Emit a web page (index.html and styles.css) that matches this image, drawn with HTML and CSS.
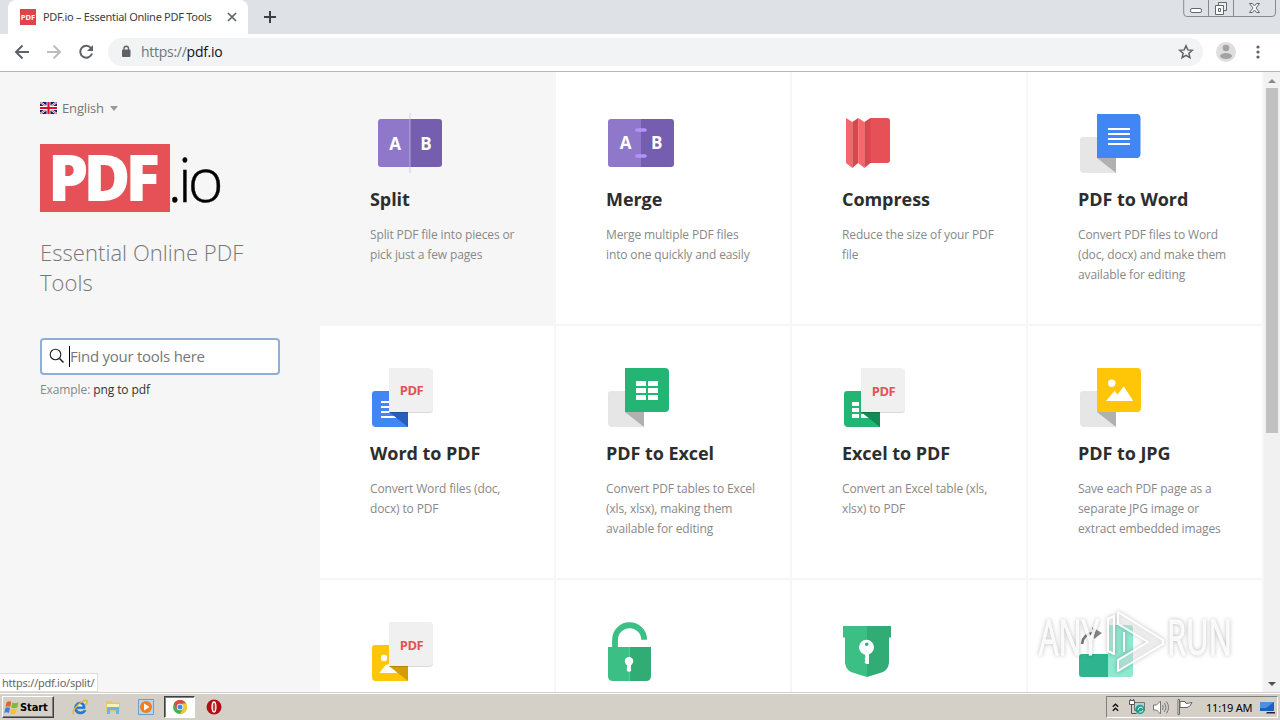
FILE: index.html
```
<!DOCTYPE html>
<html lang="en">
<head>
    <meta charset="UTF-8">
    <meta name="viewport" content="width=device-width, initial-scale=1.0">
    <title>PDF.io – Essential Online PDF Tools</title>
    <link rel="stylesheet" href="styles.css">
</head>
<body>
    <div class="screen">
        <header class="tab-strip">
            <div class="tab">
                <span class="favicon">PDF</span>
                <span class="tab-title">PDF.io – Essential Online PDF Tools</span>
                <svg class="tab-close" width="10" height="10" viewBox="0 0 10 10"><path d="M1 1l8 8M9 1L1 9" stroke="#5f6368" stroke-width="1.7"/></svg>
            </div>
            <svg class="new-tab" width="14" height="14" viewBox="0 0 14 14"><path d="M7 1v12M1 7h12" stroke="#3c4043" stroke-width="2"/></svg>
            <svg class="window-buttons" width="94" height="18" viewBox="0 0 94 18" fill="none" stroke="#62666d">
                <path d="M.7-1V13q0 3.5 3 3.5H89q3.500 0 3.500-3.500V-1M25.500 0v16M50.500 0v16" stroke="#858a94"/>
                <rect x="7.500" y="8.500" width="11" height="4" rx="1.500" fill="#fff"/>
                <path d="M35.500 2.500h8v8h-8z" fill="#eee"/>
                <path d="M32.500 5.500h8v9h-8z" fill="#fff"/>
                <path d="M35.500 8.500h2v3h-2z"/>
                <path d="M66.500 3.500h3l2 2.500 2-2.500h3l-3.500 4.500 3.500 4.500h-3l-2-2.500-2 2.500h-3l3.500-4.500z" fill="#fff"/>
            </svg>
        </header>

        <div class="toolbar">
            <svg width="16" height="16" viewBox="0 0 16 16" fill="none" stroke="#5f6368" stroke-width="2"><path d="M15 8H2M8.500 1.500L2 8l6.500 6.500"/></svg>
            <svg width="16" height="16" viewBox="0 0 16 16" fill="none" stroke="#babcbe" stroke-width="2"><path d="M1 8h13M7.500 1.500L14 8l-6.500 6.500"/></svg>
            <svg width="16" height="16" viewBox="0 0 16 16" fill="none" stroke="#5f6368" stroke-width="2"><path d="M13 4A6 6 0 1 0 14 9.500"/><path d="M15 1v6H9z" fill="#5f6368" stroke="none"/></svg>
            <div class="address-bar">
                <svg width="10" height="13" viewBox="0 0 10 13"><rect x="1" y="4.500" width="8.500" height="7.500" rx="1" fill="#5f6368"/><path d="M3 5V3.500a2.200 2.200 0 0 1 4.500 0V5" fill="none" stroke="#5f6368" stroke-width="1.400"/></svg>
                <span class="url"><span class="scheme">https://</span>pdf.io</span>
                <svg class="star" width="16" height="16" viewBox="0 0 16 16"><path d="M8 1.800l1.800 4.100 4.500.4-3.400 3 1 4.400L8 11.400l-3.900 2.300 1-4.400-3.400-3 4.500-.4z" fill="none" stroke="#5f6368" stroke-width="1.500"/></svg>
            </div>
            <svg class="avatar" width="20" height="20" viewBox="0 0 20 20"><circle cx="10" cy="10" r="10" fill="#dedede"/><circle cx="10" cy="6" r="3.300" fill="#a3a3a3"/><ellipse cx="10" cy="14" rx="6" ry="3" fill="#a3a3a3"/></svg>
            <svg class="menu-dots" width="4" height="14" viewBox="0 0 4 14" fill="#5f6368"><circle cx="2" cy="2" r="1.600"/><circle cx="2" cy="7" r="1.600"/><circle cx="2" cy="12" r="1.600"/></svg>
        </div>

        <div class="page">
            <aside class="sidebar">
                <div class="language">
                    <svg width="17" height="12" viewBox="0 0 17 12">
                        <path d="M0 0h17v12H0z" fill="#16166b"/>
                        <path d="M0 0l17 12M17 0L0 12" stroke="#fff" stroke-width="2"/>
                        <path d="M0 0l17 12M17 0L0 12" stroke="#d8213b" stroke-width=".8"/>
                        <path d="M8.500 0v12M0 6h17" stroke="#fff" stroke-width="3.800"/>
                        <path d="M8.500 0v12M0 6h17" stroke="#d80d2a" stroke-width="2.200"/>
                    </svg>
                    <span>English</span>
                    <i class="caret"></i>
                </div>
                <svg class="logo" width="190" height="68" viewBox="0 0 190 68">
                    <path d="M0 0h130v68H0z" fill="#e65157"/>
                    <text class="logo-pdf" x="8" y="57" textLength="112">PDF</text>
                    <text class="logo-io" x="127.500" y="57.500" textLength="56">.io</text>
                </svg>
                <p class="tagline">Essential Online PDF Tools</p>
                <div class="search">
                    <svg width="16" height="16" viewBox="0 0 16 16" fill="none" stroke="#222"><circle cx="6.500" cy="6.500" r="5.300" stroke-width="1.100"/><path d="M10.500 10.500l4 4" stroke-width="1.600"/></svg>
                    <i class="cursor"></i>
                    <span>Find your tools here</span>
                </div>
                <p class="example">Example: <span>png to pdf</span></p>
            </aside>

            <main class="tools">
                <div class="tool active">
                    <svg class="icon" viewBox="0 0 72 64">
                        <path d="M40 7H11q-3 0-3 3v42q0 3 3 3h29z" fill="#8f78ca"/>
                        <path d="M40 7h29q3 0 3 3v42q0 3-3 3H40z" fill="#755db0"/>
                        <path d="M40 1v60" stroke="#c9c3dc" stroke-opacity=".5" stroke-width="1.500"/>
                        <text class="letter" x="25" y="38">A</text>
                        <text class="letter" x="56" y="38">B</text>
                    </svg>
                    <h3>Split</h3>
                    <p>Split PDF file into pieces or<br>pick just a few pages</p>
                </div>
                <div class="tool">
                    <svg class="icon" viewBox="0 0 72 64">
                        <path d="M35 7H5q-3 0-3 3v42q0 3 3 3h30z" fill="#8f78ca"/>
                        <path d="M35 7h30q3 0 3 3v42q0 3-3 3H35z" fill="#755db0"/>
                        <path d="M31 18h8M31 44h8" stroke="#b294f8" stroke-width="3.600" stroke-linecap="round"/>
                        <text class="letter" x="19.600" y="37">A</text>
                        <text class="letter" x="50.700" y="37">B</text>
                    </svg>
                    <h3>Merge</h3>
                    <p>Merge multiple PDF files<br>into one quickly and easily</p>
                </div>
                <div class="tool">
                    <svg class="icon" viewBox="0 0 72 64">
                        <path d="M28 6h17q3 0 3 3v39q0 3-3 3H28z" fill="#e65157"/>
                        <path d="M4 6l6.300 4v46L4 51z" fill="#f4676d"/>
                        <path d="M16.200 6l-5.900 4v46l5.900-5z" fill="#d6484e"/>
                        <path d="M16.200 6l6.100 4v46l-6.100-5z" fill="#f4676d"/>
                        <path d="M28.500 6l-6.200 4v46l6.200-5z" fill="#d6484e"/>
                    </svg>
                    <h3>Compress</h3>
                    <p>Reduce the size of your PDF<br>file</p>
                </div>
                <div class="tool">
                    <svg class="icon" viewBox="0 0 72 64">
                        <path d="M2 28q0-3 3-3h33v36H6q-4 0-4-4z" fill="#e6e6e6"/>
                        <path d="M19 46h19v15z" fill="#b1b1b1"/>
                        <path d="M19 2h40q3 0 3.500 4v36q-.5 4-3.500 4H19z" fill="#4285f4"/>
                        <path d="M30 17h22M30 22h22M30 27h22M30 32h22" stroke="#fff" stroke-width="2"/>
                    </svg>
                    <h3>PDF to Word</h3>
                    <p>Convert PDF files to Word<br>(doc, docx) and make them<br>available for editing</p>
                </div>
                <div class="tool">
                    <svg class="icon" viewBox="0 0 72 64">
                        <path d="M2 28q0-3 3-3h33v36H6q-4 0-4-4z" fill="#4285f4"/>
                        <path d="M11 36h10M11 41h10M11 46h11M11 51h15" stroke="#fff" stroke-width="2"/>
                        <path d="M19 46h19v15z" fill="#2a5db8"/>
                        <path class="sheet" d="M19 2h40q4 0 4 4v36q0 4-4 4H19z"/>
                        <text class="pdf" x="41.500" y="29.300">PDF</text>
                    </svg>
                    <h3>Word to PDF</h3>
                    <p>Convert Word files (doc,<br>docx) to PDF</p>
                </div>
                <div class="tool">
                    <svg class="icon" viewBox="0 0 72 64">
                        <path d="M2 28q0-3 3-3h33v36H6q-4 0-4-4z" fill="#e6e6e6"/>
                        <path d="M19 46h19v15z" fill="#b1b1b1"/>
                        <path d="M19 2h40q4 0 4 4v36q0 4-4 4H19z" fill="#23b574"/>
                        <path d="M30 15h10v5H30zM42 15h10v5H42zM30 22h10v5H30zM42 22h10v5H42zM30 29h10v5H30zM42 29h10v5H42z" fill="#fff"/>
                    </svg>
                    <h3>PDF to Excel</h3>
                    <p>Convert PDF tables to Excel<br>(xls, xlsx), making them<br>available for editing</p>
                </div>
                <div class="tool">
                    <svg class="icon" viewBox="0 0 72 64">
                        <path d="M2 28q0-3 3-3h33v36H6q-4 0-4-4z" fill="#23b574"/>
                        <path d="M10 36h7v4h-7zM10 42h7v4h-7zM10 48h7v4h-7zM19 48h9v4h-9z" fill="#fff"/>
                        <path d="M19 46h19v15z" fill="#148a53"/>
                        <path class="sheet" d="M19 2h40q4 0 4 4v36q0 4-4 4H19z"/>
                        <text class="pdf" x="41.500" y="30.300">PDF</text>
                    </svg>
                    <h3>Excel to PDF</h3>
                    <p>Convert an Excel table (xls,<br>xlsx) to PDF</p>
                </div>
                <div class="tool">
                    <svg class="icon" viewBox="0 0 72 64">
                        <path d="M2 28q0-3 3-3h33v36H6q-4 0-4-4z" fill="#e6e6e6"/>
                        <path d="M19 46h19v15z" fill="#b1b1b1"/>
                        <path d="M19 2h40q4 0 4 4v36q0 4-4 4H19z" fill="#fec606"/>
                        <circle cx="33.700" cy="17.300" r="3.700" fill="#fff"/>
                        <path d="M28 35l8.700-10.300 2.600 4 6.400-8.400L55.300 35z" fill="#fff"/>
                    </svg>
                    <h3>PDF to JPG</h3>
                    <p>Save each PDF page as a<br>separate JPG image or<br>extract embedded images</p>
                </div>
                <div class="tool">
                    <svg class="icon" viewBox="0 0 72 64">
                        <path d="M2 28q0-3 3-3h33v36H6q-4 0-4-4z" fill="#fec606"/>
                        <circle cx="14" cy="38" r="3.200" fill="#fff"/>
                        <path d="M9.300 53l6.400-8 4-1 7.600 9z" fill="#fff"/>
                        <path d="M19 46h19v15z" fill="#d59c06"/>
                        <path class="sheet" d="M19 2h40q4 0 4 4v36q0 4-4 4H19z"/>
                        <text class="pdf" x="41.500" y="30.300">PDF</text>
                    </svg>
                </div>
                <div class="tool">
                    <svg class="icon" viewBox="0 0 72 64">
                        <path d="M9 28v-8a14.600 14.600 0 0 1 29.200-.3" fill="none" stroke="#3bbf84" stroke-width="5.800"/>
                        <path d="M23.500 27H2v29q0 5 5 5h16.500z" fill="#3bbf84"/>
                        <path d="M23.500 27H45v29q0 5-5 5H23.500z" fill="#31ac74"/>
                        <path d="M21.200 43h3.600l.4 8q-2.200 1.500-4.400 0z" fill="#fff"/>
                        <circle cx="23" cy="41.300" r="4.200" fill="#fff"/>
                    </svg>
                </div>
                <div class="tool">
                    <svg class="icon" viewBox="0 0 72 64">
                        <path d="M25 6H1v11.500h2V43q1 8 9 10l13 4z" fill="#3bbf84"/>
                        <path d="M25 6h24v11.500h-2V43q-1 8-9 10l-13 4z" fill="#31ac74"/>
                        <circle cx="24.500" cy="27.300" r="7.500" fill="#fff"/>
                        <path d="M22.500 33h4.500v11h-3l-1.500-2 1-1.500-1-1.500 1-1.500z" fill="#fff"/>
                        <circle cx="24.700" cy="24.300" r="1.700" fill="#31ac74"/>
                    </svg>
                </div>
                <div class="tool">
                    <svg class="icon" viewBox="0 0 72 64">
                        <path d="M4 24q1-10 11-11" fill="none" stroke="#777" stroke-width="2.600"/>
                        <path d="M14 7l10 6-8 6z" fill="#888"/>
                        <path d="M30 34H4q-3 0-3 3v17q0 3 3 3h26z" fill="#2fb490"/>
                        <path d="M30 5h22q3 0 3 3v46q0 3-3 3H30z" fill="#8fe8d0"/>
                    </svg>
                </div>
            </main>

            <div class="scrollbar">
                <i class="arrow-up"></i>
                <i class="thumb"></i>
                <i class="arrow-down"></i>
            </div>
            <div class="status">https://pdf.io/split/</div>
            <svg class="watermark" width="206" height="76" viewBox="0 0 206 76">
                <text x="5" y="53" textLength="60" lengthAdjust="spacingAndGlyphs">ANY</text>
                <text x="133" y="53" textLength="65" lengthAdjust="spacingAndGlyphs">RUN</text>
                <path d="M74 17L80 14V52L74 49zM84 10L129 38 129 42 84 69V58L114 40 84 22z" fill="#fff" fill-opacity=".35"/>
                <path d="M74 17L80 14V52L74 49zM84 10L129 38V42L84 69V58L114 40 84 22zM90 30V50" fill="none" stroke="#fff" stroke-width="2" stroke-linejoin="round"/>
            </svg>
        </div>

        <footer class="taskbar">
            <div class="start">
                <svg width="15" height="15" viewBox="0 0 15 15">
                    <path d="M2.500 2.500Q5 .5 7.200 2L6.300 7Q4 5.500 1.500 7z" fill="#e8622c"/>
                    <path d="M8.300 2.500Q11 4 14.500 2.200L13.300 7.500Q10 9 7.300 7.500z" fill="#7dba3c"/>
                    <path d="M1.300 8Q4 6.500 6 8L5 13Q3 11.500.3 13z" fill="#3f81d6"/>
                    <path d="M7 8.500Q10 10 13 8.500L12 13Q9 15 6.200 13.500z" fill="#f6c42a"/>
                </svg>
                <span>Start</span>
            </div>
            <div class="launchers">
                <svg width="16" height="16" viewBox="0 0 16 16">
                    <path d="M13 9.500H4.500Q5 13 8.500 13q2 0 3-1.500h2.500Q12 15.300 8 15 2.500 14.300 2.500 9 3 3.500 8 3.200q5.500.3 5 6.300z" fill="#2478d0" stroke="#2478d0" stroke-width=".8"/>
                    <path d="M4.700 7.500h6Q10.300 5 7.800 5 5.300 5 4.700 7.500z" fill="#e7f3fc"/>
                    <path d="M1.500 15Q-.5 13 5 7T15 1.500q1 1.500-1.500 4.500" fill="none" stroke="#e3b52c" stroke-width="1.300"/>
                </svg>
                <svg width="16" height="16" viewBox="0 0 16 16">
                    <path d="M1 2h5l1 1.500h8V13H1z" fill="#e5c868"/>
                    <path d="M2 5h12v5H2z" fill="#faf0bd"/>
                    <path d="M2 15V9q0-1 1-1h10q1 0 1 1v6h-3v-4H5v4z" fill="#6fb3e0"/>
                </svg>
                <svg width="16" height="16" viewBox="0 0 16 16">
                    <path d="M.5.500h15v15H.5z" fill="#b7d5ef" stroke="#689dce"/>
                    <circle cx="8" cy="8" r="6" fill="#f1801c"/>
                    <path d="M6 4.500L11.500 8 6 11.500z" fill="#fff"/>
                </svg>
                <div class="pressed">
                    <svg width="14" height="14" viewBox="0 0 14 14">
                        <circle cx="7" cy="7" r="7" fill="#4cae50"/>
                        <path d="M.9 3.500A7 7 0 0 1 13.100 3.500H7L4 8.800z" fill="#dd4a3d"/>
                        <path d="M13.100 3.500A7 7 0 0 1 7 14l3-5.200-.5-5.300z" fill="#fbc62f"/>
                        <circle cx="7" cy="7" r="3.200" fill="#fff"/>
                        <circle cx="7" cy="7" r="2.500" fill="#4286ef"/>
                    </svg>
                </div>
                <svg width="16" height="16" viewBox="0 0 16 16">
                    <circle cx="8" cy="8" r="7.500" fill="#b50d15"/>
                    <ellipse cx="8" cy="8" rx="1.900" ry="5" fill="#c84048" stroke="#fff" stroke-width="1.300"/>
                </svg>
            </div>
            <div class="tray">
                <svg width="7" height="9" viewBox="0 0 7 9" fill="none" stroke="#111" stroke-width="1.400"><path d="M.8 3.700l2.700-2.500 2.700 2.500M.8 7.700l2.700-2.500 2.700 2.500"/></svg>
                <svg class="network" width="17" height="16" viewBox="0 0 17 16">
                    <path d="M5.500 3.500h10v8h-10z" fill="#a9d5de" stroke="#777"/>
                    <path d="M.5 1.500h5v4h-5z" fill="#fff" stroke="#555"/>
                    <path d="M1.500 0v2M4.500 0v2M2.500 5v9.500h5" fill="none" stroke="#555"/>
                    <circle cx="11" cy="10.500" r="4.700" fill="#249b8b"/>
                    <path d="M9 11q.5-3 3-3l2 1.500M14 11q-1 3-4 2" fill="none" stroke="#d5fff8"/>
                </svg>
                <svg width="17" height="15" viewBox="0 0 17 15" fill="none" stroke="#777"><path d="M.5 5h3l4-4v13l-4-4h-3z" fill="#fff"/><path d="M9.500 5q1.500 2.500 0 5M11.500 3q3 4.500 0 9M13.500 1.500q4 6 0 12"/></svg>
                <svg class="flag" width="16" height="16" viewBox="0 0 16 16" fill="#fff" stroke="#666"><path d="M1 .5h1.500v15H1z"/><path d="M3 2.500h5l1 2 6-1q-2 5-5 5H3z"/></svg>
                <time>11:19 AM</time>
                <svg width="15" height="13" viewBox="0 0 15 13"><path d="M0 1h14v9H0z" fill="#1763c1"/><path d="M0 1h14L6 7H0z" fill="#4b91dd"/><path d="M7 11h8v1.500H6z" fill="#223"/></svg>
            </div>
        </footer>
    </div>
</body>
</html>
```
FILE: styles.css
```
* {
    box-sizing: border-box;
}

body {
    margin: 0;
    overflow: hidden;
    font-family: "Open Sans", "Noto Sans", sans-serif;
    background-color: #fff;
}

svg {
    display: block;
    flex: none;
}

h3,
p {
    margin: 0;
}

.screen {
    width: 1280px;
    height: 720px;
    display: flex;
    flex-direction: column;
    overflow: hidden;
}

/* Browser window */
.tab-strip {
    height: 34px;
    flex: none;
    display: flex;
    padding-left: 8px;
    background-color: #dee1e6;
}

.tab {
    width: 240px;
    height: 34px;
    display: flex;
    align-items: center;
    padding-left: 12px;
    background-color: #fff;
    border-radius: 8px 8px 0 0;
}

.favicon {
    width: 16px;
    height: 16px;
    background-color: #e0444b;
    color: #fff;
    font-size: 7.5px;
    font-weight: 700;
    line-height: 16px;
    text-align: center;
}

.tab-title {
    width: 170px;
    margin-left: 7px;
    padding-bottom: 1px;
    color: #3c4043;
    font-family: "Noto Sans", sans-serif;
    font-size: 11px;
    letter-spacing: -0.29px;
    white-space: nowrap;
}

.tab-close {
    margin-left: 14px;
}

.new-tab {
    margin: 10px 0 0 15px;
}

.window-buttons {
    margin-left: auto;
    margin-right: 3px;
}

.toolbar {
    height: 38px;
    flex: none;
    display: flex;
    align-items: center;
    gap: 16px;
    padding: 0 20px 2px 14px;
    background-color: #fff;
    border-bottom: 1px solid #b6b4b6;
}

.address-bar {
    flex: 1;
    height: 28px;
    display: flex;
    align-items: center;
    margin-left: -2px;
    padding: 0 9px 0 13px;
    background-color: #f1f3f4;
    border-radius: 14px;
}

.url {
    margin-left: 10px;
    color: #111;
    font-size: 14px;
    letter-spacing: -0.27px;
}

.scheme {
    color: #70757a;
}

.star {
    margin-left: auto;
}

.avatar {
    margin-left: -3px;
}

.menu-dots {
    margin-left: 4px;
}

/* Page */
.page {
    position: relative;
    flex: 1;
    display: flex;
    overflow: hidden;
    background-color: #fff;
}

.sidebar {
    width: 320px;
    flex: none;
    padding: 26px 40px 0;
    background-color: #f6f6f6;
}

.language {
    height: 20px;
    display: flex;
    align-items: center;
    color: #777;
    font-size: 13px;
    letter-spacing: -0.15px;
}

.language span {
    margin: 0 6px 0 5px;
}

.caret {
    border: 4px solid transparent;
    border-top: 5px solid #999;
    border-bottom: 0;
}

.logo {
    margin-top: 26px;
}

.logo-pdf {
    font-size: 64px;
    font-weight: 800;
    fill: #fff;
}

.logo-io {
    font-size: 61px;
    font-weight: 300;
    fill: #000;
    stroke: #000;
    stroke-width: 0.4px;
}

.tagline {
    margin-top: 25px;
    color: #777;
    font-size: 22px;
    font-weight: 300;
    line-height: 30px;
    letter-spacing: 0.05px;
}

.search {
    width: 240px;
    height: 37px;
    display: flex;
    align-items: center;
    margin-top: 41px;
    padding: 0 0 1px 7px;
    background-color: #fff;
    border: 2px solid #8faed6;
    border-radius: 4px;
    color: #777;
    font-size: 15px;
    letter-spacing: -0.26px;
}

.cursor {
    width: 1px;
    height: 21px;
    margin-left: 4px;
    background-color: #000;
}

.example {
    margin-top: 5px;
    color: #888;
    font-size: 12px;
    line-height: 20px;
    letter-spacing: -0.1px;
}

.example span {
    color: #333;
}

.tools {
    width: 944px;
    flex: none;
    display: grid;
    grid-template-columns: repeat(4, 236px);
    grid-auto-rows: 254px;
}

.tool {
    padding: 40px 0 0 50px;
    background-color: #fff;
    border-right: 2px solid #f6f6f6;
    border-bottom: 2px solid #f6f6f6;
}

.tool.active {
    background-color: #f6f6f6;
}

.icon {
    width: 72px;
    height: 64px;
}

.tool h3 {
    margin-top: 11px;
    color: #2d2d2d;
    font-size: 18px;
    font-weight: 700;
    line-height: 24px;
    letter-spacing: -0.06px;
    white-space: nowrap;
}

.tool p {
    margin-top: 14px;
    color: #888;
    font-size: 12px;
    line-height: 20px;
    letter-spacing: -0.13px;
    white-space: nowrap;
}

.letter {
    fill: #fff;
    font-size: 17px;
    font-weight: 700;
    text-anchor: middle;
}

.sheet {
    fill: #f0f0f0;
    filter: drop-shadow(0 1px 0.5px rgba(0, 0, 0, 0.15));
}

.pdf {
    fill: #e65157;
    font-size: 13px;
    font-weight: 700;
    letter-spacing: -0.4px;
    text-anchor: middle;
}

.scrollbar {
    width: 16px;
    display: flex;
    flex-direction: column;
    align-items: center;
    padding: 7px 0 6px;
    background-color: #f1f1f1;
}

.arrow-up,
.arrow-down {
    border: 4px solid transparent;
}

.arrow-up {
    border-top: 0;
    border-bottom-color: #8b8b8b;
}

.arrow-down {
    margin-top: auto;
    border-top-color: #505050;
    border-bottom: 0;
}

.thumb {
    width: 12px;
    height: 345px;
    margin-top: 5px;
    background-color: #c1c1c1;
}

.status {
    position: absolute;
    left: 0;
    bottom: 0;
    width: 98px;
    height: 19px;
    padding-left: 2px;
    background-color: #fff;
    border: 1px solid #ddd;
    border-left: 0;
    color: #666;
    font-family: "Noto Sans", sans-serif;
    font-size: 11px;
    line-height: 18px;
    letter-spacing: -0.24px;
}

.watermark {
    position: absolute;
    left: 1034px;
    top: 530px;
    filter: drop-shadow(0 0 2px rgba(0, 0, 0, 0.3));
}

.watermark text {
    fill: #fff;
    fill-opacity: 0.85;
    stroke: #fff;
    stroke-width: 0.8px;
    font-size: 50px;
}

/* Taskbar */
.taskbar {
    height: 28px;
    flex: none;
    display: flex;
    align-items: center;
    padding: 1px 2px 0;
    background-color: #d4d0c8;
    border-top: 1px solid #d4d0c8;
    box-shadow: inset 0 1px #fff;
}

.start {
    width: 52px;
    height: 22px;
    display: flex;
    align-items: center;
    padding-left: 1px;
    border: 1px solid;
    border-color: #fff #404040 #404040 #fff;
    box-shadow: inset -1px -1px #808080;
    color: #000;
    font-family: "DejaVu Sans Condensed", "DejaVu Sans", sans-serif;
    font-size: 11px;
    font-weight: 700;
}

.start span {
    margin-left: 1px;
    letter-spacing: -0.1px;
}

.launchers {
    display: flex;
    align-items: center;
    margin-left: 18px;
}

.launchers > svg {
    margin-right: 17px;
}

.launchers > svg:nth-child(3) {
    margin-right: 10px;
}

.pressed {
    width: 31px;
    height: 22px;
    display: flex;
    align-items: center;
    justify-content: center;
    margin-right: 11px;
    background-color: #fff;
    border: 1px solid;
    border-color: #404040 #fff #fff #404040;
    box-shadow: inset 1px 1px #808080;
}

.tray {
    width: 172px;
    height: 22px;
    display: flex;
    align-items: center;
    margin-left: auto;
    padding-left: 5px;
    border: 1px solid;
    border-color: #808080 #fff #fff #808080;
}

.tray .network {
    margin: 0 7px 0 10px;
}

.tray .flag {
    margin-left: 7px;
}

.tray time {
    width: 47px;
    margin: 0 7px 0 13px;
    color: #000;
    font-family: "Noto Sans", sans-serif;
    font-size: 11px;
    letter-spacing: -0.2px;
    white-space: nowrap;
}
```
